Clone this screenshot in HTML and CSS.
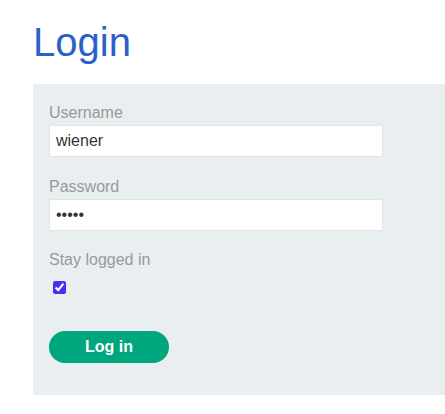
FILE: index.html
```html
<!DOCTYPE html>
<html>
<head>
<meta charset="utf-8">
<link rel="stylesheet" href="styles.css">
<title>Login</title>
</head>
<body>
<div class="page">
  <h1 class="title">Login</h1>
  <form class="panel">
    <label class="label" for="username">Username</label>
    <input class="field" id="username" type="text" value="wiener">
    <label class="label gap" for="password">Password</label>
    <input class="field" id="password" type="password" value="peter">
    <label class="label gap-sm" for="stay">Stay logged in</label>
    <input class="check" id="stay" type="checkbox" checked>
    <button class="btn" type="button">Log in</button>
  </form>
</div>
</body>
</html>
```
FILE: styles.css
```css
html, body {
  margin: 0;
  padding: 0;
  overflow: hidden;
  background: #ffffff;
  font-family: "Liberation Sans", Arial, sans-serif;
}
.page {
  padding-left: 33px;
}
.title {
  margin: 17px 0 17px 0;
  font-size: 40px;
  line-height: 50px;
  font-weight: normal;
  color: #2c5fc9;
}
.panel {
  display: flex;
  flex-direction: column;
  align-items: flex-start;
  width: 412px;
  box-sizing: border-box;
  background: #e9eef1;
  padding: 17px 16px 32px 16px;
}
.label {
  display: block;
  font-size: 16px;
  line-height: 24px;
  color: #999999;
  margin-bottom: 0;
}
.label.gap {
  margin-top: 18px;
}
.label.gap-sm {
  margin-top: 17px;
}
.field {
  width: 334px;
  height: 32px;
  box-sizing: border-box;
  border: 1px solid #e3e3e3;
  background: #ffffff;
  padding: 0 6px;
  font-family: "Liberation Sans", Arial, sans-serif;
  font-size: 16px;
  color: #333333;
  outline: none;
  margin: 0;
}
.check {
  width: 13px;
  height: 13px;
  margin: 9px 0 0 4px;
  accent-color: #4b2cf0;
}
.btn {
  margin-top: 37px;
  width: 120px;
  height: 32px;
  border: none;
  border-radius: 16px;
  background: #00a67e;
  color: #ffffff;
  font-family: "Liberation Sans", Arial, sans-serif;
  font-size: 16px;
  font-weight: bold;
  padding: 0;
}
```
